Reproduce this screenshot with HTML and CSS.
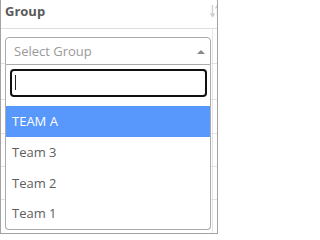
FILE: index.html
```html
<!DOCTYPE html>
<html>
<head>
<meta charset="utf-8">
<link rel="stylesheet" href="styles.css">
</head>
<body>
<div class="grid">
  <div class="head">
    <span class="title">Group</span>
    <svg class="sort" width="9" height="16" viewBox="0 0 9 16">
      <path d="M2.5 2 V13 M0.5 10.5 L2.5 13.5 L4.5 10.5" fill="none" stroke="#cfcfcf" stroke-width="1.4"/>
      <path d="M7.5 14 V3 M5.5 5.5 L7.5 2.5 L9.5 5.5" fill="none" stroke="#cfcfcf" stroke-width="1.4"/>
    </svg>
  </div>
  <div class="body">
    <div class="bgrow tall"></div>
    <div class="bgrow tall"></div>
    <div class="bgrow mid"></div>
    <div class="bgrow"></div>
    <div class="bgrow"></div>
    <div class="select2">
      <div class="selection">
        <span class="placeholder">Select Group</span>
        <span class="arrow"></span>
      </div>
      <div class="dropdown">
        <div class="search">
          <input class="field" type="text">
          <span class="caret"></span>
        </div>
        <ul class="results">
          <li class="option hl">TEAM A</li>
          <li class="option">Team 3</li>
          <li class="option">Team 2</li>
          <li class="option">Team 1</li>
        </ul>
      </div>
    </div>
  </div>
</div>
</body>
</html>
```
FILE: styles.css
```css
* { box-sizing: border-box; }
html, body { margin: 0; padding: 0; background: #fff; }
body { font-family: "Open Sans", "Liberation Sans", sans-serif; }

.grid {
  width: 218px;
  height: 234px;
  border: 1px solid #a3a3a3;
  border-top: none;
  overflow: hidden;
  display: flex;
  flex-direction: column;
}

.head {
  height: 29px;
  flex: none;
  border-bottom: 1px solid #dedede;
  display: flex;
  justify-content: space-between;
  align-items: flex-start;
  padding: 2px 0 0 4px;
  overflow: hidden;
}
.title {
  font-size: 13px;
  line-height: 18px;
  font-weight: 700;
  color: #5a5a5a;
}
.sort {
  margin-top: 1px;
  margin-right: -2px;
  flex: none;
}

.body {
  position: relative;
  flex: 1;
  background: linear-gradient(#e6e6e6, #e6e6e6) no-repeat 211px 0 / 1px 100%;
}
.bgrow { height: 33px; border-bottom: 1px solid #e3e3e3; }
.bgrow.tall { height: 36px; }
.bgrow.tall:first-child { height: 35px; }
.bgrow.mid { height: 34px; }

.select2 {
  position: absolute;
  top: 8px;
  left: 4px;
  width: 206px;
}
.selection {
  height: 28px;
  border: 1px solid #aaa;
  border-radius: 4px 4px 0 0;
  display: flex;
  align-items: flex-start;
  justify-content: space-between;
  padding: 1px 5px 0 8px;
  background: #fff;
}
.placeholder {
  font-size: 13px;
  line-height: 25px;
  color: #999;
}
.arrow {
  width: 0;
  height: 0;
  margin-top: 11px;
  border-left: 4px solid transparent;
  border-right: 4px solid transparent;
  border-bottom: 4px solid #888;
}

.dropdown {
  border: 1px solid #aaa;
  border-top: none;
  border-radius: 0 0 4px 4px;
  background: #fff;
}
.search {
  position: relative;
  padding: 4px 3px 4px 4px;
}
.field {
  display: block;
  width: 100%;
  height: 28px;
  margin: 0;
  border: 2px solid #111;
  border-radius: 4px;
  outline: none;
  background: #fff;
  font: 13px "Open Sans", sans-serif;
  padding: 0 4px;
}
.caret {
  position: absolute;
  left: 9px;
  top: 10px;
  width: 1px;
  height: 15px;
  background: #222;
}

.results {
  list-style: none;
  margin: 0;
  padding: 5px 0 0 0;
}
.option {
  height: 30.75px;
  padding: 6px 6px 0 6px;
  font-size: 13px;
  line-height: 18.75px;
  color: #5e5e5e;
}
.option.hl {
  background: #5897fb;
  color: #fff;
}
.option:last-child { border-radius: 0 0 3px 3px; }
```
